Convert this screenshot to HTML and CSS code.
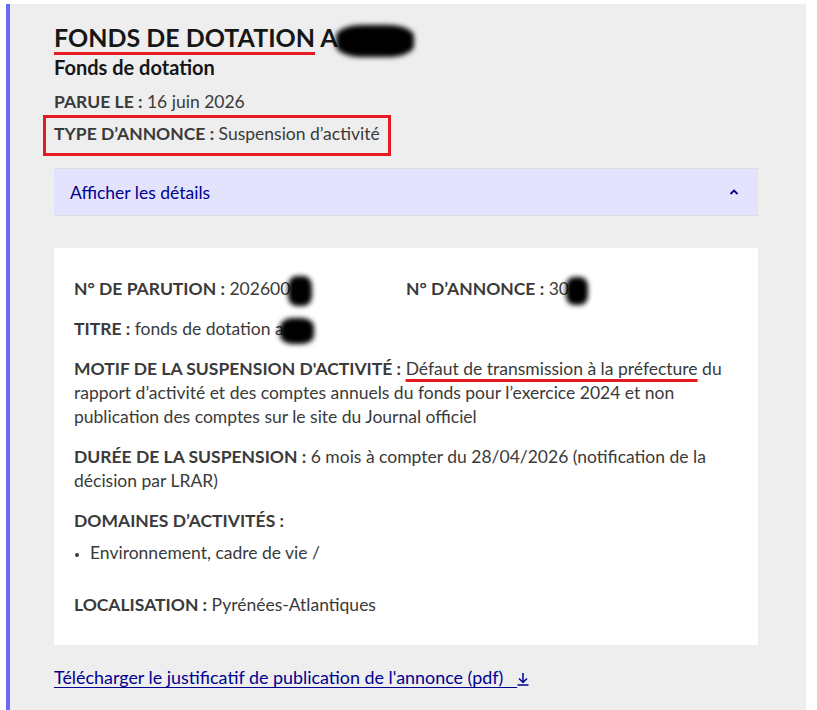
FILE: index.html
```html
<!DOCTYPE html>
<html lang="fr">
<head>
<meta charset="utf-8">
<title>Fonds de dotation</title>
<link rel="stylesheet" href="styles.css">
</head>
<body>
<div class="panel">
  <h1 class="title"><span class="mark">FONDS DE DOTATION</span> A<span class="blob blob-title"></span></h1>
  <p class="subtitle">Fonds de dotation</p>
  <p class="meta"><strong>PARUE LE :</strong> 16 juin 2026</p>
  <p class="meta boxed"><strong>TYPE D’ANNONCE :</strong> Suspension d’activité</p>

  <div class="details-bar">
    <span>Afficher les détails</span>
    <svg class="chevron" width="10" height="8" viewBox="0 0 10 8"><polyline points="1.5,6 5,2.5 8.5,6" fill="none" stroke="#000091" stroke-width="1.8"/></svg>
  </div>

  <div class="card">
    <div class="row two">
      <p class="field"><strong>N° DE PARUTION :</strong> 202600<span class="blob blob-num"></span></p>
      <p class="field"><strong>N° D’ANNONCE :</strong> 30<span class="blob blob-num2"></span></p>
    </div>
    <p class="field"><strong>TITRE :</strong> fonds de dotation a<span class="blob blob-titre"></span></p>
    <p class="field"><strong>MOTIF DE LA SUSPENSION D'ACTIVITÉ :</strong> <span class="mark2">Défaut de transmission à la préfecture</span> du rapport d’activité et des comptes annuels du fonds pour l’exercice 2024 et non publication des comptes sur le site du Journal officiel</p>
    <p class="field"><strong>DURÉE DE LA SUSPENSION :</strong> 6 mois à compter du 28/04/2026 (notification de la décision par LRAR)</p>
    <p class="field"><strong>DOMAINES D’ACTIVITÉS :</strong></p>
    <ul class="list">
      <li>Environnement, cadre de vie /</li>
    </ul>
    <p class="field loc"><strong>LOCALISATION :</strong> Pyrénées-Atlantiques</p>
  </div>

  <p class="download"><a href="#">Télécharger le justificatif de publication de l'annonce (pdf)&nbsp;&nbsp;&nbsp;<svg class="dl" width="12" height="14" viewBox="0 0 12 14"><path d="M6 1v9M2 6.5l4 4 4-4M0.5 13h11" fill="none" stroke="#000091" stroke-width="1.5"/></svg></a></p>
</div>
</body>
</html>
```

FILE: styles.css
```css
html, body {
  background: #ffffff;
}
body {
  margin: 4px 11px 0 6px;
  font-family: Lato, "Noto Sans", sans-serif;
  color: #3a3a3a;
}
p, h1, ul {
  margin: 0;
}
.panel {
  background: #eeeeee;
  border-left: 4px solid #6a6af4;
  padding: 17px 48px 30px 44px;
  min-height: 680px;
  box-sizing: border-box;
}
.title {
  font-size: 25px;
  line-height: 32px;
  font-weight: 700;
  color: #161616;
  white-space: nowrap;
}
.mark {
  text-decoration: underline;
  text-decoration-color: #e41b23;
  text-decoration-thickness: 3px;
  text-underline-offset: 5px;
}
.subtitle {
  font-size: 20px;
  line-height: 28px;
  font-weight: 700;
  color: #161616;
}
.meta {
  font-size: 17.5px;
  line-height: 24px;
  margin-top: 9px;
}
.meta strong, .field strong {
  font-weight: 700;
  color: #3a3a3a;
}
.boxed {
  display: inline-block;
  margin-top: 1px;
  margin-left: -11px;
  padding: 4px 8px 7px 8px;
  border: 3px solid #e41b23;
}
.details-bar {
  margin-top: 12px;
  height: 46px;
  background: #e3e3fd;
  border-top: 1px solid #dddddd;
  border-bottom: 1px solid #dddddd;
  display: flex;
  align-items: center;
  justify-content: space-between;
  padding: 0 19px 0 16px;
  color: #000091;
  font-size: 17.5px;
}
.chevron {
  display: block;
}
.card {
  margin-top: 32px;
  background: #ffffff;
  padding: 29px 20px 28px 20px;
  display: flex;
  flex-direction: column;
  gap: 16px;
}
.row.two {
  display: grid;
  grid-template-columns: 1fr 1fr;
}
.field {
  font-size: 17.5px;
  line-height: 24px;
}
.field + .field {
  margin-top: 0;
}
.motif {
  margin-top: 1px;
}
.list {
  margin: -8px 0 0 0;
  padding: 0 0 0 16px;
  font-size: 17.5px;
  line-height: 24px;
}
.list li::marker {
  font-size: 12px;
}
.loc {
  margin-top: 12px;
}
.mark2 {
  text-decoration: underline;
  text-decoration-color: #e41b23;
  text-decoration-thickness: 3px;
  text-underline-offset: 4px;
}
.blob {
  display: inline-block;
  background: #000;
  filter: blur(2.5px);
  border-radius: 35%;
  vertical-align: middle;
}
.blob-title {
  width: 78px;
  height: 32px;
  margin: -8px 0 -8px -2px;
}
.blob-num {
  width: 24px;
  height: 30px;
  margin: -8px 0 -8px -2px;
}
.blob-num2 {
  width: 22px;
  height: 28px;
  margin: -8px 0 -8px -3px;
}
.blob-titre {
  width: 34px;
  height: 26px;
  margin: -6px 0 -6px -4px;
}
.download {
  margin-top: 20px;
  font-size: 17.9px;
  line-height: 24px;
}
.download a {
  color: #000091;
  text-decoration: underline;
  text-underline-offset: 3px;
}
.dl {
  vertical-align: -2px;
}
```
